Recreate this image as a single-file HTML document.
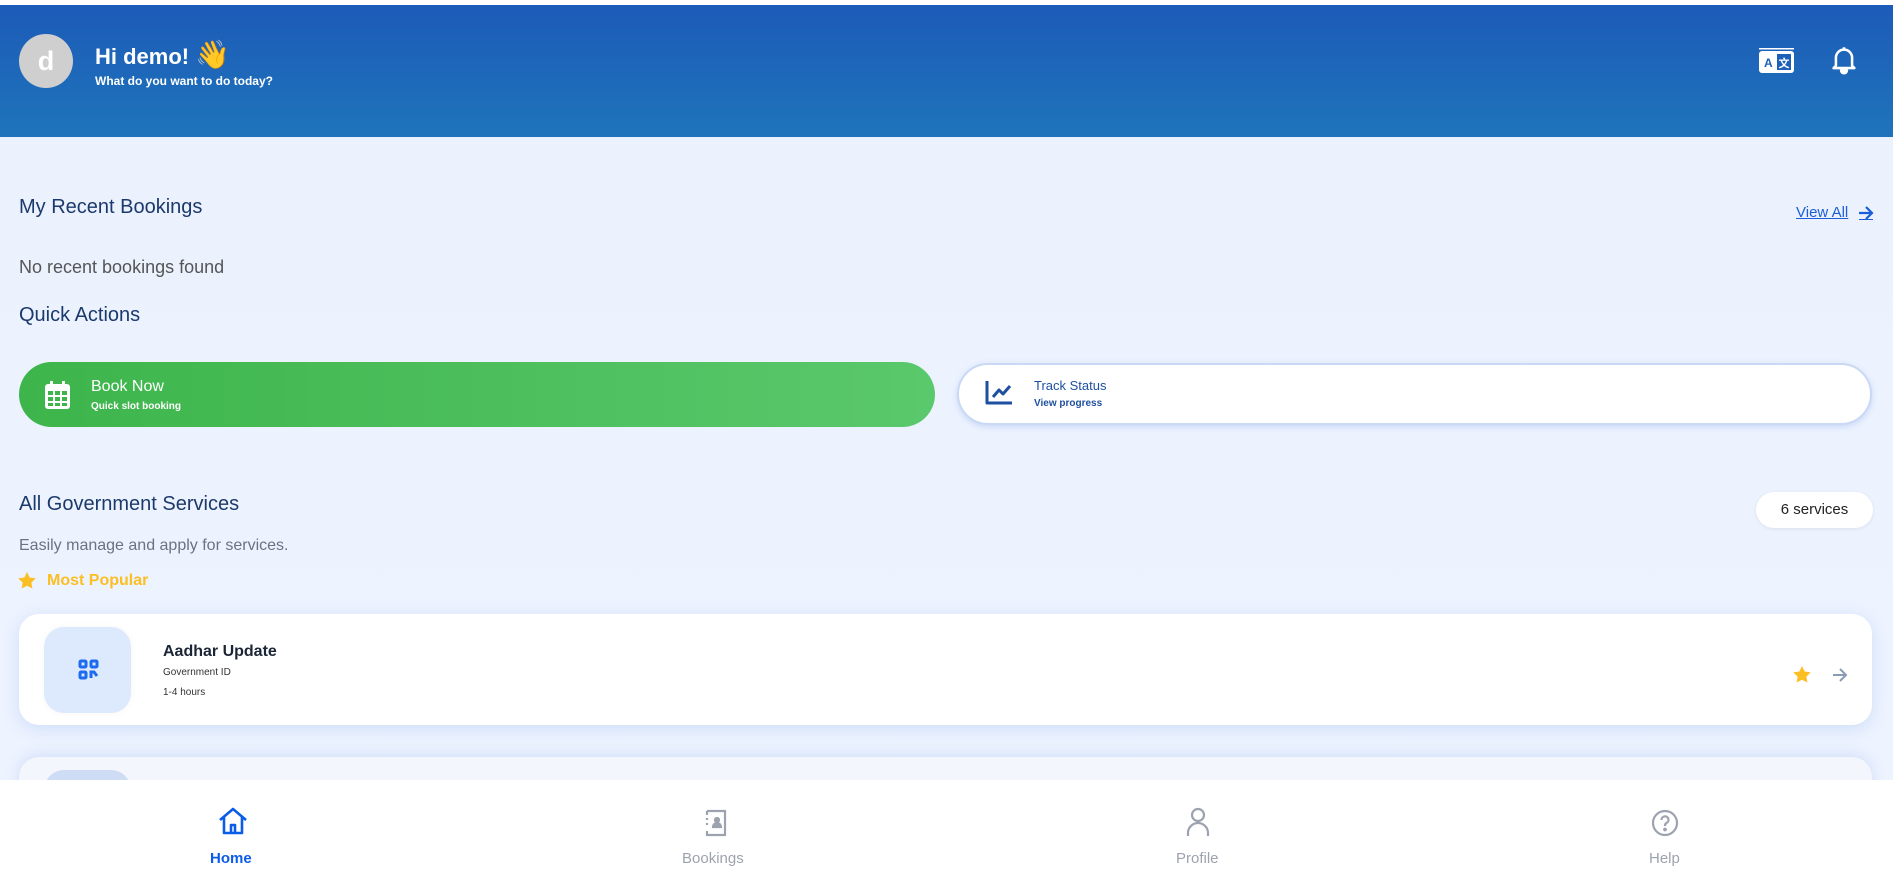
<!DOCTYPE html>
<html><head><meta charset="utf-8"><style>
*{margin:0;padding:0;box-sizing:border-box}
body{width:1897px;height:883px;overflow:hidden;background:#fff;font-family:"Liberation Sans",Arial,sans-serif;position:relative}
.page{position:absolute;left:0;top:5px;width:1893px;height:878px;background:linear-gradient(#eaf1fe,#eef4ff)}
.hdr{position:absolute;left:0;top:0;width:1893px;height:132px;background:linear-gradient(#1d5bb8,#1e74bb)}
.abs{position:absolute}
.t{position:absolute;white-space:nowrap}
</style></head><body>
<div class="page">
<div class="hdr">
 <div class="abs" style="left:19px;top:29px;width:54px;height:54px;border-radius:50%;background:#cfcfcf;color:#fff;font-weight:bold;font-size:27px;text-align:center;line-height:54px">d</div>
 <div class="t" style="left:95px;top:33px;font-size:22px;font-weight:bold;color:#fff">Hi demo! <span style="font-family:'Noto Color Emoji','DejaVu Sans',sans-serif;font-size:28px;color:#f5b400">👋</span></div>
 <div class="t" style="left:95px;top:69px;font-size:12px;font-weight:bold;color:#fff">What do you want to do today?</div>
 <svg class="abs" style="left:1759px;top:43px" width="35" height="25" viewBox="0 0 35 25"><rect x="0" y="0" width="35" height="1.5" fill="#fff"/><rect x="0" y="3" width="35" height="22" rx="3" fill="#fff"/><rect x="18" y="6" width="14" height="16" fill="#1e5fb8"/><text x="5" y="19" font-size="12" font-weight="bold" fill="#1e5fb8" font-family="Liberation Sans">A</text><text x="19.5" y="19" font-size="11" font-weight="bold" fill="#fff" font-family="Noto Sans CJK SC">文</text></svg>
 <svg class="abs" style="left:1830px;top:40px" width="28" height="30" viewBox="0 0 24 26" fill="none" stroke="#fff" stroke-width="2.2" stroke-linejoin="round"><path d="M12 2v2M5 18V11a7 7 0 0 1 14 0v7l2 2H3z"/><path d="M9.5 22a2.5 2.5 0 0 0 5 0z" fill="#fff"/></svg>
</div>
<div class="t" style="left:19px;top:191px;font-size:20px;color:#1b3a6b">My Recent Bookings</div>
<div class="t" style="left:1796px;top:199px;font-size:15px;color:#1a5fd8;text-decoration:underline">View All</div>
<svg class="abs" style="left:1858px;top:201px" width="16" height="14" viewBox="0 0 16 14" fill="none" stroke="#1a5fd8" stroke-width="2.2"><path d="M1 7h13M8 1l6 6-6 6"/><path d="M1 13.5h14" stroke-width="1"/></svg>
<div class="t" style="left:19px;top:252px;font-size:18px;color:#555">No recent bookings found</div>
<div class="t" style="left:19px;top:299px;font-size:20px;color:#1b3a6b">Quick Actions</div>
<div class="abs" style="left:19px;top:357px;width:916px;height:65px;border-radius:33px;background:linear-gradient(90deg,#3db54b,#5ac86c)">
 <svg class="abs" style="left:26px;top:19px" width="25" height="28" viewBox="0 0 25 28"><rect x="0" y="3" width="25" height="25" rx="3" fill="#fff"/><rect x="5" y="0" width="3" height="6" fill="#fff"/><rect x="17" y="0" width="3" height="6" fill="#fff"/><g fill="#3db54b"><rect x="3" y="10" width="5" height="4"/><rect x="10" y="10" width="5" height="4"/><rect x="17" y="10" width="5" height="4"/><rect x="3" y="16" width="5" height="4"/><rect x="10" y="16" width="5" height="4"/><rect x="17" y="16" width="5" height="4"/><rect x="3" y="22" width="5" height="3"/><rect x="10" y="22" width="5" height="3"/><rect x="17" y="22" width="5" height="3"/></g></svg>
 <div class="t" style="left:72px;top:16px;font-size:16px;color:#fff">Book Now</div>
 <div class="t" style="left:72px;top:39px;font-size:10px;font-weight:bold;color:#fff">Quick slot booking</div>
</div>
<div class="abs" style="left:957px;top:358px;width:915px;height:62px;border-radius:31px;background:#fff;border:2px solid #c9d9f5;box-shadow:0 2px 6px rgba(100,140,220,.25)">
 <svg class="abs" style="left:26px;top:16px" width="28" height="24" viewBox="0 0 28 24" fill="none" stroke="#1e4fa0" stroke-width="3" stroke-linejoin="round"><path d="M2 0v22h25"/><path d="M8 16l6-7 4 4 7-8"/></svg>
 <div class="t" style="left:75px;top:13px;font-size:13px;color:#1e4fa0">Track Status</div>
 <div class="t" style="left:75px;top:33px;font-size:10px;font-weight:bold;color:#1e4fa0">View progress</div>
</div>
<div class="t" style="left:19px;top:488px;font-size:20px;color:#1b3a6b">All Government Services</div>
<div class="abs" style="left:1756px;top:487px;width:117px;height:36px;border-radius:18px;background:#fff;box-shadow:0 1px 4px rgba(0,0,0,.08);font-size:15px;color:#222;text-align:center;line-height:36px">6 services</div>
<div class="t" style="left:19px;top:532px;font-size:16px;color:#6b7280">Easily manage and apply for services.</div>
<svg class="abs" style="left:18px;top:567px" width="18" height="17" viewBox="0 0 24 23"><path d="M12 0l3.6 7.4 8.2 1.2-5.9 5.7 1.4 8.1L12 18.6 4.7 22.4l1.4-8.1L.2 8.6l8.2-1.2z" fill="#fbbf24"/></svg>
<div class="t" style="left:47px;top:567px;font-size:16px;font-weight:bold;color:#fbbf24">Most Popular</div>
<div class="abs" style="left:19px;top:609px;width:1853px;height:111px;border-radius:20px;background:#fff;box-shadow:0 4px 16px rgba(120,160,230,.25)">
 <div class="abs" style="left:25px;top:13px;width:87px;height:86px;border-radius:20px;background:#dde9fc;box-shadow:0 0 8px rgba(0,0,0,.04)">
  <svg class="abs" style="left:34px;top:32px" width="21" height="21" viewBox="0 0 21 21" fill="none" stroke="#1d6cf0" stroke-width="3"><rect x="2" y="2" width="6" height="6" rx="1"/><rect x="13" y="2" width="6" height="6" rx="1"/><rect x="2" y="13" width="6" height="6" rx="1"/><path d="M13 19v-6h3l3 4"/></svg>
 </div>
 <div class="t" style="left:144px;top:29px;font-size:16px;font-weight:bold;color:#1b2536">Aadhar Update</div>
 <div class="t" style="left:144px;top:53px;font-size:10px;color:#333">Government ID</div>
 <div class="t" style="left:144px;top:73px;font-size:10px;color:#333">1-4 hours</div>
 <svg class="abs" style="left:1774px;top:52px" width="18" height="17" viewBox="0 0 24 23"><path d="M12 0l3.6 7.4 8.2 1.2-5.9 5.7 1.4 8.1L12 18.6 4.7 22.4l1.4-8.1L.2 8.6l8.2-1.2z" fill="#fbbf24"/></svg>
 <svg class="abs" style="left:1813px;top:54px" width="16" height="14" viewBox="0 0 16 14" fill="none" stroke="#8a9bb5" stroke-width="2"><path d="M1 7h13M8 1l6 6-6 6"/></svg>
</div>
<div class="abs" style="left:19px;top:752px;width:1853px;height:111px;border-radius:20px;background:#f3f6fc;box-shadow:0 -2px 14px rgba(120,160,230,.25)">
 <div class="abs" style="left:25px;top:13px;width:87px;height:86px;border-radius:20px;background:#cfdcf5"></div>
</div>
</div>
<div class="abs" style="left:0;top:780px;width:1897px;height:103px;background:#fff">
 <svg class="abs" style="left:218px;top:27px" width="30" height="28" viewBox="0 0 30 28" fill="none" stroke="#0b5ce6" stroke-width="2.6" stroke-linejoin="round"><path d="M2 13L15 2l13 11M6 10v16h18V10M13 26v-8h4v8"/></svg>
 <div class="t" style="left:210px;top:70px;font-size:15px;font-weight:bold;color:#0b5ce6">Home</div>
 <svg class="abs" style="left:702px;top:29px" width="26" height="28" viewBox="0 0 26 28" fill="none" stroke="#9ca3af" stroke-width="2.2"><path d="M5 2h18v24H5v-4M5 6V2M5 11v-2M5 16v-2"/><circle cx="15" cy="11" r="2" fill="#9ca3af"/><path d="M11 18a4 4 0 0 1 8 0z" fill="#9ca3af"/></svg>
 <div class="t" style="left:682px;top:70px;font-size:15px;color:#9ca3af">Bookings</div>
 <svg class="abs" style="left:1185px;top:27px" width="26" height="30" viewBox="0 0 26 30" fill="none" stroke="#9ca3af" stroke-width="2.2"><circle cx="13" cy="8" r="6"/><path d="M3 29v-3a10 10 0 0 1 20 0v3"/></svg>
 <div class="t" style="left:1176px;top:70px;font-size:15px;color:#9ca3af">Profile</div>
 <svg class="abs" style="left:1651px;top:29px" width="28" height="28" viewBox="0 0 28 28" fill="none" stroke="#9ca3af" stroke-width="2.2"><circle cx="14" cy="14" r="12"/><path d="M10.5 11a3.5 3.5 0 1 1 5 3c-1 .6-1.5 1.2-1.5 2.5v.5"/><circle cx="14" cy="20.5" r=".8" fill="#9ca3af"/></svg>
 <div class="t" style="left:1649px;top:70px;font-size:15px;color:#9ca3af">Help</div>
</div>
</body></html>
